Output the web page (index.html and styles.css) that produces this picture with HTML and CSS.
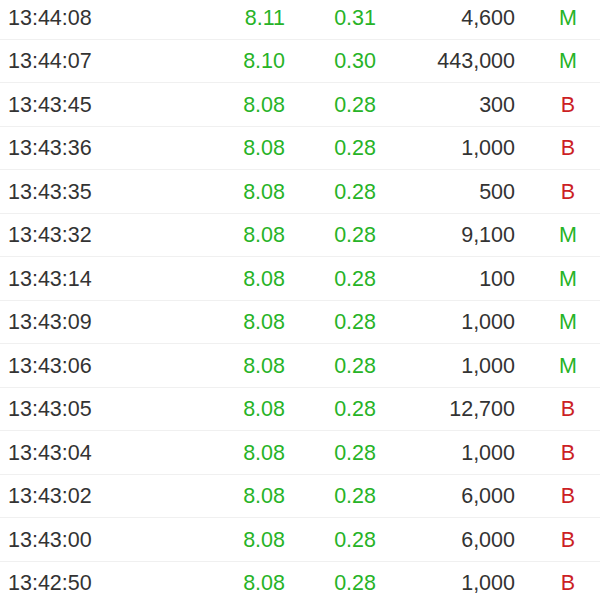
FILE: index.html
```html
<!DOCTYPE html>
<html>
<head>
<meta charset="utf-8">
<link rel="stylesheet" href="styles.css">
</head>
<body>
<div class="list">
  <div class="row"><span class="time">13:44:08</span><span class="num up">8.11</span><span class="num up">0.31</span><span class="num vol">4,600</span><span class="flag m">M</span></div>
  <div class="row"><span class="time">13:44:07</span><span class="num up">8.10</span><span class="num up">0.30</span><span class="num vol">443,000</span><span class="flag m">M</span></div>
  <div class="row"><span class="time">13:43:45</span><span class="num up">8.08</span><span class="num up">0.28</span><span class="num vol">300</span><span class="flag b">B</span></div>
  <div class="row"><span class="time">13:43:36</span><span class="num up">8.08</span><span class="num up">0.28</span><span class="num vol">1,000</span><span class="flag b">B</span></div>
  <div class="row"><span class="time">13:43:35</span><span class="num up">8.08</span><span class="num up">0.28</span><span class="num vol">500</span><span class="flag b">B</span></div>
  <div class="row"><span class="time">13:43:32</span><span class="num up">8.08</span><span class="num up">0.28</span><span class="num vol">9,100</span><span class="flag m">M</span></div>
  <div class="row"><span class="time">13:43:14</span><span class="num up">8.08</span><span class="num up">0.28</span><span class="num vol">100</span><span class="flag m">M</span></div>
  <div class="row"><span class="time">13:43:09</span><span class="num up">8.08</span><span class="num up">0.28</span><span class="num vol">1,000</span><span class="flag m">M</span></div>
  <div class="row"><span class="time">13:43:06</span><span class="num up">8.08</span><span class="num up">0.28</span><span class="num vol">1,000</span><span class="flag m">M</span></div>
  <div class="row"><span class="time">13:43:05</span><span class="num up">8.08</span><span class="num up">0.28</span><span class="num vol">12,700</span><span class="flag b">B</span></div>
  <div class="row"><span class="time">13:43:04</span><span class="num up">8.08</span><span class="num up">0.28</span><span class="num vol">1,000</span><span class="flag b">B</span></div>
  <div class="row"><span class="time">13:43:02</span><span class="num up">8.08</span><span class="num up">0.28</span><span class="num vol">6,000</span><span class="flag b">B</span></div>
  <div class="row"><span class="time">13:43:00</span><span class="num up">8.08</span><span class="num up">0.28</span><span class="num vol">6,000</span><span class="flag b">B</span></div>
  <div class="row"><span class="time">13:42:50</span><span class="num up">8.08</span><span class="num up">0.28</span><span class="num vol">1,000</span><span class="flag b">B</span></div>
</div>
</body>
</html>
```
FILE: styles.css
```css
html, body {
  margin: 0;
  padding: 0;
  background: #ffffff;
  overflow: hidden;
}
body {
  font-family: "Liberation Sans", Arial, sans-serif;
  font-size: 21.5px;
  color: #333333;
}
.list {
  margin-top: -4px;
}
.row {
  display: grid;
  grid-template-columns: 192px 85px 91px 139px 85px;
  align-items: center;
  height: 43.5px;
  box-sizing: border-box;
  padding-left: 8px;
  padding-top: 2px;
  border-bottom: 1px solid #f0f0f0;
  line-height: 1;
}
.num {
  text-align: right;
}
.up {
  color: #27b327;
}
.vol {
  color: #333333;
}
.flag {
  text-align: center;
  padding-left: 21px;
  width: 64px;
}
.m {
  color: #27b327;
}
.b {
  color: #cc1f25;
}
```
